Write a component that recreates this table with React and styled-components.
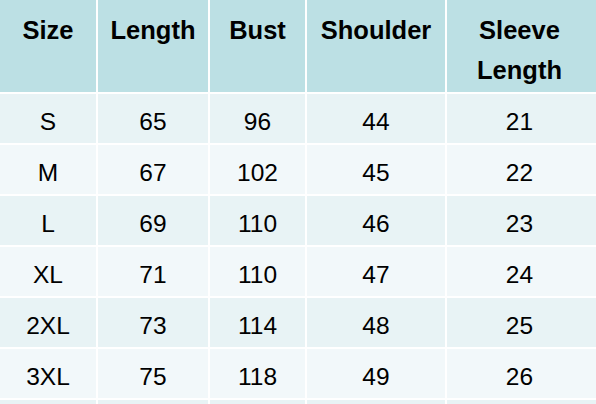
import React from "react";
import styled, { createGlobalStyle } from "styled-components";

const Global = createGlobalStyle`
  html, body { margin: 0; padding: 0; background: #ffffff; }
  body { font-family: "Liberation Sans", Arial, sans-serif; overflow: hidden; }
`;

const Grid = styled.div`
  display: grid;
  grid-template-columns: 96px 110px 95px 138px 149px;
  grid-template-rows: 92px repeat(7, 49px);
  gap: 2px;
  width: 596px;
  height: 404px;
  overflow: hidden;
  background: #ffffff;
`;

const HeadCell = styled.div`
  background: #bce0e4;
  color: #000;
  font-weight: bold;
  font-size: 25.5px;
  line-height: 40px;
  text-align: center;
  padding: 10px ${(p) => (p.$last ? "4px" : "0")} 0 0;
`;

const Cell = styled.div`
  background: ${(p) => (p.$alt ? "#f2f8fa" : "#e8f3f5")};
  color: #000;
  font-size: 24.5px;
  display: flex;
  align-items: center;
  justify-content: center;
  padding: 6px ${(p) => (p.$last ? "4px" : "0")} 0 0;
`;

const headers = ["Size", "Length", "Bust", "Shoulder", "Sleeve Length"];
const rows = [
  ["S", "65", "96", "44", "21"],
  ["M", "67", "102", "45", "22"],
  ["L", "69", "110", "46", "23"],
  ["XL", "71", "110", "47", "24"],
  ["2XL", "73", "114", "48", "25"],
  ["3XL", "75", "118", "49", "26"],
  ["", "", "", "", ""],
];

export default function App() {
  return (
    <>
      <Global />
      <Grid>
        {headers.map((h, i) => (
          <HeadCell key={h} $last={i === 4}>
            {i === 4 ? (
              <>
                Sleeve
                <br />
                Length
              </>
            ) : (
              h
            )}
          </HeadCell>
        ))}
        {rows.map((r, ri) =>
          r.map((v, ci) => (
            <Cell key={ri + "-" + ci} $alt={ri % 2 === 1} $last={ci === 4}>
              {v}
            </Cell>
          ))
        )}
      </Grid>
    </>
  );
}
